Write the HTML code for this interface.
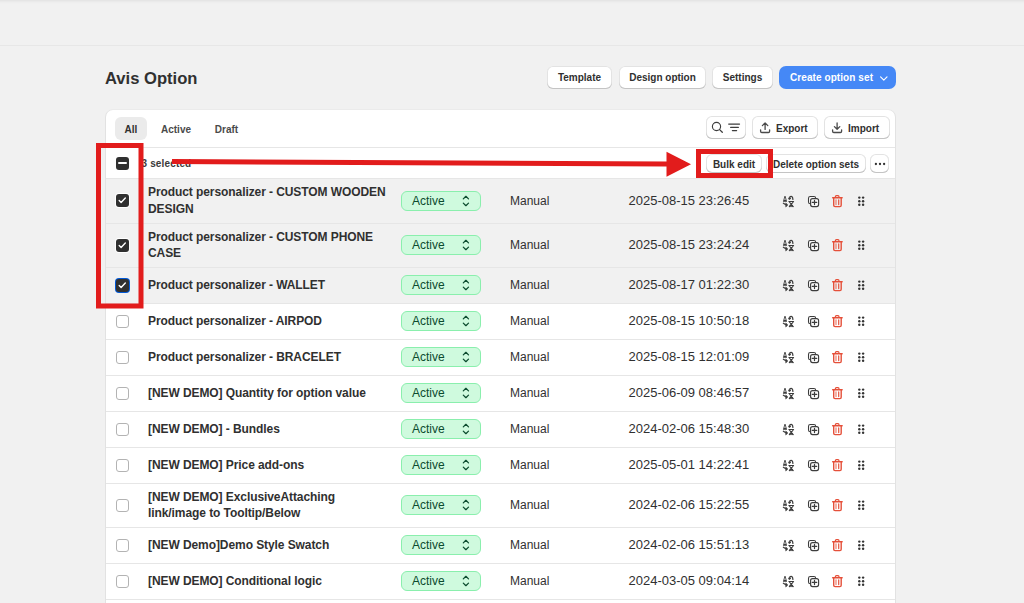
<!DOCTYPE html><html><head><meta charset="utf-8"><title>Avis Option</title><style>
*{box-sizing:border-box;margin:0;padding:0}
html,body{width:1024px;height:603px;overflow:hidden;background:#f1f1f1;font-family:"Liberation Sans",sans-serif;color:#303030}
.abs{position:absolute}
.topgrad{left:0;top:0;width:1024px;height:4px;background:linear-gradient(#e5e5e5 0,#e5e5e5 1px,#eaeaea 1px,#eaeaea 2px,#eeeeee 2px,#eeeeee 3px,#f0f0f0 3px)}
.topline{left:0;top:45px;width:1024px;height:1px;background:#e7e7e7}
.title{left:105px;top:69px;font-size:16.6px;font-weight:700;line-height:20px;color:#303030}
.btn{position:absolute;background:#fff;border-radius:6px;box-shadow:inset 0 -1px 0 #c4c4c4, inset 0 0 0 1px #e3e3e3;padding-top:1px;font-size:10px;font-weight:700;color:#303030;display:flex;align-items:center;justify-content:center;white-space:nowrap}
.primary{background:#4588f6;color:#fff;box-shadow:none;border-radius:7px;padding-top:0;letter-spacing:0.08px}
.card{left:106px;top:110px;width:789px;height:520px;background:#fff;border-radius:7px;box-shadow:-1px 0 0 0 #e2e2e2, 1px 0 0 0 #e2e2e2, 0 -1px 0 0 #ebebeb}
.tab{position:absolute;top:118px;height:22px;font-size:10px;font-weight:700;color:#4a4a4a;display:flex;align-items:center;justify-content:center}
.hline{position:absolute;left:106px;width:789px;height:1px;background:#e6e6e6}
.rowbg{position:absolute;left:106px;width:789px;background:#f1f1f1}
.cb{position:absolute;left:116px;width:13px;height:13px;border-radius:3px}
.cb.off{border:1px solid #b3b3b3;background:#fff}
.cb.on{background:#303030;box-shadow:0 0 0 1px #fff}
.cb.focus{box-shadow:0 0 0 1px #0058d6}
.name{position:absolute;left:148px;font-size:12px;font-weight:700;line-height:16px;color:#303030;white-space:nowrap;letter-spacing:-0.08px}
.badge{position:absolute;left:401px;width:80px;height:20px;border-radius:6px;background:#cffade;border:1px solid #8aefad;font-size:12px;color:#0c4b2e;line-height:17px}
.badge span{position:absolute;left:10px;top:1px}
.badge svg{position:absolute;left:60px;top:3px}
.manual{position:absolute;left:510px;font-size:12px;color:#303030;line-height:16px}
.date{position:absolute;left:628.5px;font-size:13px;color:#303030;line-height:16px}
.ic{position:absolute;line-height:0}
</style></head><body>
<div class="abs topgrad"></div><div class="abs topline"></div>
<div class="abs title">Avis Option</div>
<div class="btn" style="left:547px;top:66px;width:65px;height:23px;padding-top:0">Template</div>
<div class="btn" style="left:619px;top:66px;width:87px;height:23px;padding-top:0">Design option</div>
<div class="btn" style="left:712px;top:66px;width:61px;height:23px;padding-top:0">Settings</div>
<div class="btn primary" style="left:779px;top:66px;width:117px;height:23px;justify-content:flex-start;padding-left:11px">Create option set<svg style="margin-left:7px;position:relative;top:1px" width="9" height="6" viewBox="0 0 9 6"><path d="M0.6 0.9 L3.8 4.1 L7 0.9" fill="none" stroke="#fff" stroke-width="1.15" stroke-linecap="round" stroke-linejoin="round"/></svg></div>
<div class="abs card"></div>
<div class="abs" style="left:115px;top:117px;width:32px;height:23px;border-radius:6px;background:#ebebeb"></div>
<div class="tab" style="left:115px;width:32px;color:#303030">All</div>
<div class="tab" style="left:155px;width:42px">Active</div>
<div class="tab" style="left:208px;width:37px">Draft</div>
<div class="btn" style="left:706px;top:116px;width:40px;height:23px"><svg style="position:absolute;left:0;top:0" width="40" height="23" viewBox="0 0 40 23"><circle cx="10.5" cy="10.5" r="4.1" fill="none" stroke="#3d3d3d" stroke-width="1.15"/><path d="M13.6 13.6 L16.3 16.3" stroke="#3d3d3d" stroke-width="1.3" stroke-linecap="round"/><path d="M22.7 8 H33.5 M24.6 11.3 H32.4 M26.4 14.6 H30.6" stroke="#3d3d3d" stroke-width="1.25" stroke-linecap="round"/></svg></div>
<div class="btn" style="left:752px;top:116px;width:66px;height:23px;justify-content:flex-start;padding-left:7px"><svg width="12" height="12" viewBox="0 0 12 12" style="margin-right:5px"><path d="M6.1 7.4 V0.9 M3.4 3.6 L6.1 0.9 L8.8 3.6 M1.6 7.8 V9.3 A1.2 1.2 0 0 0 2.8 10.5 H9.4 A1.2 1.2 0 0 0 10.6 9.3 V7.8" fill="none" stroke="#4a4a4a" stroke-width="1.3" stroke-linecap="round" stroke-linejoin="round"/></svg>Export</div>
<div class="btn" style="left:824px;top:116px;width:66px;height:23px;justify-content:flex-start;padding-left:7px"><svg width="12" height="12" viewBox="0 0 12 12" style="margin-right:5px"><path d="M6.1 0.9 V7.3 M3.4 4.6 L6.1 7.3 L8.8 4.6 M1.6 7.8 V9.3 A1.2 1.2 0 0 0 2.8 10.5 H9.4 A1.2 1.2 0 0 0 10.6 9.3 V7.8" fill="none" stroke="#4a4a4a" stroke-width="1.3" stroke-linecap="round" stroke-linejoin="round"/></svg>Import</div>
<div class="hline" style="top:147px"></div>
<div class="cb on" style="top:157px"><div style="position:absolute;left:2px;top:5.4px;width:9px;height:1.7px;background:#fff;border-radius:1px"></div></div>
<div class="abs" style="left:141.5px;top:157px;font-size:10px;font-weight:700;color:#3a3a3a;line-height:14px;letter-spacing:0.15px">3 selected</div>
<div class="btn" style="left:706px;top:154px;width:56px;height:19px">Bulk edit</div>
<div class="btn" style="left:766px;top:154px;width:100px;height:19px">Delete option sets</div>
<div class="btn" style="left:870px;top:154px;width:19px;height:19px"><svg width="12" height="4" viewBox="0 0 12 4"><circle cx="1.9" cy="2" r="1.15" fill="#303030"/><circle cx="6" cy="2" r="1.15" fill="#303030"/><circle cx="10.1" cy="2" r="1.15" fill="#303030"/></svg></div>
<div class="rowbg" style="top:179px;height:44px"></div>
<div class="hline" style="top:178px"></div>
<div class="cb on" style="top:194px"><svg width="13" height="13" viewBox="0 0 13 13" style="position:absolute;left:0;top:0"><path d="M3.2 6.6 L5.1 8.4 L9.3 4.1" fill="none" stroke="#fff" stroke-width="1.4" stroke-linecap="round" stroke-linejoin="round"/></svg></div>
<div class="name" style="top:184px">Product personalizer - CUSTOM WOODEN</div>
<div class="name" style="top:201px">DESIGN</div>
<div class="badge" style="top:191px"><span>Active</span><svg width="8" height="12" viewBox="0 0 8 12"><path d="M1.3 3.9 L3.9 1.3 L6.5 3.9 M1.3 8.1 L3.9 10.7 L6.5 8.1" fill="none" stroke="#0c4b2e" stroke-width="1.25" stroke-linecap="round" stroke-linejoin="round"/></svg></div>
<div class="manual" style="top:192.5px">Manual</div>
<div class="date" style="top:192.5px">2025-08-15 23:26:45</div>
<div class="ic" style="left:782px;top:195px"><svg width="13" height="13" viewBox="0 0 13 13"><g fill="none" stroke="#3d3d3d" stroke-linecap="round" stroke-linejoin="round">
<path d="M0.9 6.7 L2.5 1.1 H3.5 L5.1 6.7 Z M2.2 4.7 L3 2.6 L3.8 4.7 Z" fill="#3d3d3d" fill-rule="evenodd" stroke="none"/>
<path d="M7.7 3.6 V2.6 Q7.7 1.4 9 1.4 Q10.8 1.4 10.9 4.4" stroke-width="1.2"/>
<path d="M6.6 3.1 H8.8 L7.7 4.6 Z" fill="#3d3d3d" stroke-width="0.7"/>
<path d="M1.4 8.3 L4.2 10" stroke-width="1.3"/>
<path d="M4 8.3 L5.8 10 L4 11.7 Z" fill="#3d3d3d" stroke-width="0.7"/>
<path d="M6.9 6.5 H11.6" stroke-width="1.1"/>
<path d="M7.4 7 L11.2 11.6 M11.2 7 L7.4 11.6" stroke-width="1.1"/>
<path d="M8.6 9.6 H10 L11 11.6 H7.6 Z" fill="#3d3d3d" stroke-width="0.6"/>
</g></svg></div>
<div class="ic" style="left:807px;top:195px"><svg width="13" height="13" viewBox="0 0 13 13"><g fill="none" stroke="#3d3d3d" stroke-width="1.05" stroke-linejoin="round">
<rect x="1.5" y="1.5" width="7.2" height="7.2" rx="1.8" fill="#f6f6f6"/>
<rect x="3.6" y="3.6" width="8" height="8" rx="2" fill="#fafafa" stroke-width="1.15"/>
<path d="M7.5 5.3 V9.6 M5.3 7.45 H9.7" stroke-linecap="round" stroke-width="1.2"/>
</g></svg></div>
<div class="ic" style="left:831px;top:194px"><svg width="13" height="14" viewBox="0 0 13 14"><g fill="none" stroke="#e5503a" stroke-linejoin="round" stroke-linecap="round">
<path d="M4.4 3.2 V2.7 Q4.4 1.7 5.4 1.7 H7 Q8 1.7 8 2.7 V3.2" stroke-width="1.2"/>
<path d="M1.7 3.75 H11.1" stroke-width="1.5"/>
<path d="M2.7 4 V11.2 Q2.7 12.6 4.1 12.6 H8.9 Q10.2 12.6 10.2 11.2 V4" stroke-width="1.4"/>
<path d="M5 5.9 V10.6" stroke-width="1.1" stroke-opacity="0.8"/>
<path d="M7.7 5.9 V10.6" stroke-width="1.2"/>
</g></svg></div>
<div class="ic" style="left:857px;top:196px"><svg width="9" height="11" viewBox="0 0 9 11"><g fill="#333">
<circle cx="2.3" cy="1.6" r="1.2"/><circle cx="6.1" cy="1.6" r="1.2"/>
<circle cx="2.3" cy="5.2" r="1.2"/><circle cx="6.1" cy="5.2" r="1.2"/>
<circle cx="2.3" cy="8.8" r="1.2"/><circle cx="6.1" cy="8.8" r="1.2"/>
</g></svg></div>
<div class="rowbg" style="top:224px;height:43px"></div>
<div class="hline" style="top:223px"></div>
<div class="cb on" style="top:239px"><svg width="13" height="13" viewBox="0 0 13 13" style="position:absolute;left:0;top:0"><path d="M3.2 6.6 L5.1 8.4 L9.3 4.1" fill="none" stroke="#fff" stroke-width="1.4" stroke-linecap="round" stroke-linejoin="round"/></svg></div>
<div class="name" style="top:229px">Product personalizer - CUSTOM PHONE</div>
<div class="name" style="top:245px">CASE</div>
<div class="badge" style="top:235px"><span>Active</span><svg width="8" height="12" viewBox="0 0 8 12"><path d="M1.3 3.9 L3.9 1.3 L6.5 3.9 M1.3 8.1 L3.9 10.7 L6.5 8.1" fill="none" stroke="#0c4b2e" stroke-width="1.25" stroke-linecap="round" stroke-linejoin="round"/></svg></div>
<div class="manual" style="top:237.0px">Manual</div>
<div class="date" style="top:237.0px">2025-08-15 23:24:24</div>
<div class="ic" style="left:782px;top:239px"><svg width="13" height="13" viewBox="0 0 13 13"><g fill="none" stroke="#3d3d3d" stroke-linecap="round" stroke-linejoin="round">
<path d="M0.9 6.7 L2.5 1.1 H3.5 L5.1 6.7 Z M2.2 4.7 L3 2.6 L3.8 4.7 Z" fill="#3d3d3d" fill-rule="evenodd" stroke="none"/>
<path d="M7.7 3.6 V2.6 Q7.7 1.4 9 1.4 Q10.8 1.4 10.9 4.4" stroke-width="1.2"/>
<path d="M6.6 3.1 H8.8 L7.7 4.6 Z" fill="#3d3d3d" stroke-width="0.7"/>
<path d="M1.4 8.3 L4.2 10" stroke-width="1.3"/>
<path d="M4 8.3 L5.8 10 L4 11.7 Z" fill="#3d3d3d" stroke-width="0.7"/>
<path d="M6.9 6.5 H11.6" stroke-width="1.1"/>
<path d="M7.4 7 L11.2 11.6 M11.2 7 L7.4 11.6" stroke-width="1.1"/>
<path d="M8.6 9.6 H10 L11 11.6 H7.6 Z" fill="#3d3d3d" stroke-width="0.6"/>
</g></svg></div>
<div class="ic" style="left:807px;top:239px"><svg width="13" height="13" viewBox="0 0 13 13"><g fill="none" stroke="#3d3d3d" stroke-width="1.05" stroke-linejoin="round">
<rect x="1.5" y="1.5" width="7.2" height="7.2" rx="1.8" fill="#f6f6f6"/>
<rect x="3.6" y="3.6" width="8" height="8" rx="2" fill="#fafafa" stroke-width="1.15"/>
<path d="M7.5 5.3 V9.6 M5.3 7.45 H9.7" stroke-linecap="round" stroke-width="1.2"/>
</g></svg></div>
<div class="ic" style="left:831px;top:238px"><svg width="13" height="14" viewBox="0 0 13 14"><g fill="none" stroke="#e5503a" stroke-linejoin="round" stroke-linecap="round">
<path d="M4.4 3.2 V2.7 Q4.4 1.7 5.4 1.7 H7 Q8 1.7 8 2.7 V3.2" stroke-width="1.2"/>
<path d="M1.7 3.75 H11.1" stroke-width="1.5"/>
<path d="M2.7 4 V11.2 Q2.7 12.6 4.1 12.6 H8.9 Q10.2 12.6 10.2 11.2 V4" stroke-width="1.4"/>
<path d="M5 5.9 V10.6" stroke-width="1.1" stroke-opacity="0.8"/>
<path d="M7.7 5.9 V10.6" stroke-width="1.2"/>
</g></svg></div>
<div class="ic" style="left:857px;top:240px"><svg width="9" height="11" viewBox="0 0 9 11"><g fill="#333">
<circle cx="2.3" cy="1.6" r="1.2"/><circle cx="6.1" cy="1.6" r="1.2"/>
<circle cx="2.3" cy="5.2" r="1.2"/><circle cx="6.1" cy="5.2" r="1.2"/>
<circle cx="2.3" cy="8.8" r="1.2"/><circle cx="6.1" cy="8.8" r="1.2"/>
</g></svg></div>
<div class="rowbg" style="top:268px;height:35px"></div>
<div class="hline" style="top:267px"></div>
<div class="cb on focus" style="top:279px"><svg width="13" height="13" viewBox="0 0 13 13" style="position:absolute;left:0;top:0"><path d="M3.2 6.6 L5.1 8.4 L9.3 4.1" fill="none" stroke="#fff" stroke-width="1.4" stroke-linecap="round" stroke-linejoin="round"/></svg></div>
<div class="name" style="top:277px">Product personalizer - WALLET</div>
<div class="badge" style="top:275px"><span>Active</span><svg width="8" height="12" viewBox="0 0 8 12"><path d="M1.3 3.9 L3.9 1.3 L6.5 3.9 M1.3 8.1 L3.9 10.7 L6.5 8.1" fill="none" stroke="#0c4b2e" stroke-width="1.25" stroke-linecap="round" stroke-linejoin="round"/></svg></div>
<div class="manual" style="top:277.0px">Manual</div>
<div class="date" style="top:277.0px">2025-08-17 01:22:30</div>
<div class="ic" style="left:782px;top:279px"><svg width="13" height="13" viewBox="0 0 13 13"><g fill="none" stroke="#3d3d3d" stroke-linecap="round" stroke-linejoin="round">
<path d="M0.9 6.7 L2.5 1.1 H3.5 L5.1 6.7 Z M2.2 4.7 L3 2.6 L3.8 4.7 Z" fill="#3d3d3d" fill-rule="evenodd" stroke="none"/>
<path d="M7.7 3.6 V2.6 Q7.7 1.4 9 1.4 Q10.8 1.4 10.9 4.4" stroke-width="1.2"/>
<path d="M6.6 3.1 H8.8 L7.7 4.6 Z" fill="#3d3d3d" stroke-width="0.7"/>
<path d="M1.4 8.3 L4.2 10" stroke-width="1.3"/>
<path d="M4 8.3 L5.8 10 L4 11.7 Z" fill="#3d3d3d" stroke-width="0.7"/>
<path d="M6.9 6.5 H11.6" stroke-width="1.1"/>
<path d="M7.4 7 L11.2 11.6 M11.2 7 L7.4 11.6" stroke-width="1.1"/>
<path d="M8.6 9.6 H10 L11 11.6 H7.6 Z" fill="#3d3d3d" stroke-width="0.6"/>
</g></svg></div>
<div class="ic" style="left:807px;top:279px"><svg width="13" height="13" viewBox="0 0 13 13"><g fill="none" stroke="#3d3d3d" stroke-width="1.05" stroke-linejoin="round">
<rect x="1.5" y="1.5" width="7.2" height="7.2" rx="1.8" fill="#f6f6f6"/>
<rect x="3.6" y="3.6" width="8" height="8" rx="2" fill="#fafafa" stroke-width="1.15"/>
<path d="M7.5 5.3 V9.6 M5.3 7.45 H9.7" stroke-linecap="round" stroke-width="1.2"/>
</g></svg></div>
<div class="ic" style="left:831px;top:278px"><svg width="13" height="14" viewBox="0 0 13 14"><g fill="none" stroke="#e5503a" stroke-linejoin="round" stroke-linecap="round">
<path d="M4.4 3.2 V2.7 Q4.4 1.7 5.4 1.7 H7 Q8 1.7 8 2.7 V3.2" stroke-width="1.2"/>
<path d="M1.7 3.75 H11.1" stroke-width="1.5"/>
<path d="M2.7 4 V11.2 Q2.7 12.6 4.1 12.6 H8.9 Q10.2 12.6 10.2 11.2 V4" stroke-width="1.4"/>
<path d="M5 5.9 V10.6" stroke-width="1.1" stroke-opacity="0.8"/>
<path d="M7.7 5.9 V10.6" stroke-width="1.2"/>
</g></svg></div>
<div class="ic" style="left:857px;top:280px"><svg width="9" height="11" viewBox="0 0 9 11"><g fill="#333">
<circle cx="2.3" cy="1.6" r="1.2"/><circle cx="6.1" cy="1.6" r="1.2"/>
<circle cx="2.3" cy="5.2" r="1.2"/><circle cx="6.1" cy="5.2" r="1.2"/>
<circle cx="2.3" cy="8.8" r="1.2"/><circle cx="6.1" cy="8.8" r="1.2"/>
</g></svg></div>
<div class="hline" style="top:303px"></div>
<div class="cb off" style="top:315px"></div>
<div class="name" style="top:313px">Product personalizer - AIRPOD</div>
<div class="badge" style="top:311px"><span>Active</span><svg width="8" height="12" viewBox="0 0 8 12"><path d="M1.3 3.9 L3.9 1.3 L6.5 3.9 M1.3 8.1 L3.9 10.7 L6.5 8.1" fill="none" stroke="#0c4b2e" stroke-width="1.25" stroke-linecap="round" stroke-linejoin="round"/></svg></div>
<div class="manual" style="top:313.0px">Manual</div>
<div class="date" style="top:313.0px">2025-08-15 10:50:18</div>
<div class="ic" style="left:782px;top:315px"><svg width="13" height="13" viewBox="0 0 13 13"><g fill="none" stroke="#3d3d3d" stroke-linecap="round" stroke-linejoin="round">
<path d="M0.9 6.7 L2.5 1.1 H3.5 L5.1 6.7 Z M2.2 4.7 L3 2.6 L3.8 4.7 Z" fill="#3d3d3d" fill-rule="evenodd" stroke="none"/>
<path d="M7.7 3.6 V2.6 Q7.7 1.4 9 1.4 Q10.8 1.4 10.9 4.4" stroke-width="1.2"/>
<path d="M6.6 3.1 H8.8 L7.7 4.6 Z" fill="#3d3d3d" stroke-width="0.7"/>
<path d="M1.4 8.3 L4.2 10" stroke-width="1.3"/>
<path d="M4 8.3 L5.8 10 L4 11.7 Z" fill="#3d3d3d" stroke-width="0.7"/>
<path d="M6.9 6.5 H11.6" stroke-width="1.1"/>
<path d="M7.4 7 L11.2 11.6 M11.2 7 L7.4 11.6" stroke-width="1.1"/>
<path d="M8.6 9.6 H10 L11 11.6 H7.6 Z" fill="#3d3d3d" stroke-width="0.6"/>
</g></svg></div>
<div class="ic" style="left:807px;top:315px"><svg width="13" height="13" viewBox="0 0 13 13"><g fill="none" stroke="#3d3d3d" stroke-width="1.05" stroke-linejoin="round">
<rect x="1.5" y="1.5" width="7.2" height="7.2" rx="1.8" fill="#f6f6f6"/>
<rect x="3.6" y="3.6" width="8" height="8" rx="2" fill="#fafafa" stroke-width="1.15"/>
<path d="M7.5 5.3 V9.6 M5.3 7.45 H9.7" stroke-linecap="round" stroke-width="1.2"/>
</g></svg></div>
<div class="ic" style="left:831px;top:314px"><svg width="13" height="14" viewBox="0 0 13 14"><g fill="none" stroke="#e5503a" stroke-linejoin="round" stroke-linecap="round">
<path d="M4.4 3.2 V2.7 Q4.4 1.7 5.4 1.7 H7 Q8 1.7 8 2.7 V3.2" stroke-width="1.2"/>
<path d="M1.7 3.75 H11.1" stroke-width="1.5"/>
<path d="M2.7 4 V11.2 Q2.7 12.6 4.1 12.6 H8.9 Q10.2 12.6 10.2 11.2 V4" stroke-width="1.4"/>
<path d="M5 5.9 V10.6" stroke-width="1.1" stroke-opacity="0.8"/>
<path d="M7.7 5.9 V10.6" stroke-width="1.2"/>
</g></svg></div>
<div class="ic" style="left:857px;top:316px"><svg width="9" height="11" viewBox="0 0 9 11"><g fill="#333">
<circle cx="2.3" cy="1.6" r="1.2"/><circle cx="6.1" cy="1.6" r="1.2"/>
<circle cx="2.3" cy="5.2" r="1.2"/><circle cx="6.1" cy="5.2" r="1.2"/>
<circle cx="2.3" cy="8.8" r="1.2"/><circle cx="6.1" cy="8.8" r="1.2"/>
</g></svg></div>
<div class="hline" style="top:339px"></div>
<div class="cb off" style="top:351px"></div>
<div class="name" style="top:349px">Product personalizer - BRACELET</div>
<div class="badge" style="top:347px"><span>Active</span><svg width="8" height="12" viewBox="0 0 8 12"><path d="M1.3 3.9 L3.9 1.3 L6.5 3.9 M1.3 8.1 L3.9 10.7 L6.5 8.1" fill="none" stroke="#0c4b2e" stroke-width="1.25" stroke-linecap="round" stroke-linejoin="round"/></svg></div>
<div class="manual" style="top:349.0px">Manual</div>
<div class="date" style="top:349.0px">2025-08-15 12:01:09</div>
<div class="ic" style="left:782px;top:351px"><svg width="13" height="13" viewBox="0 0 13 13"><g fill="none" stroke="#3d3d3d" stroke-linecap="round" stroke-linejoin="round">
<path d="M0.9 6.7 L2.5 1.1 H3.5 L5.1 6.7 Z M2.2 4.7 L3 2.6 L3.8 4.7 Z" fill="#3d3d3d" fill-rule="evenodd" stroke="none"/>
<path d="M7.7 3.6 V2.6 Q7.7 1.4 9 1.4 Q10.8 1.4 10.9 4.4" stroke-width="1.2"/>
<path d="M6.6 3.1 H8.8 L7.7 4.6 Z" fill="#3d3d3d" stroke-width="0.7"/>
<path d="M1.4 8.3 L4.2 10" stroke-width="1.3"/>
<path d="M4 8.3 L5.8 10 L4 11.7 Z" fill="#3d3d3d" stroke-width="0.7"/>
<path d="M6.9 6.5 H11.6" stroke-width="1.1"/>
<path d="M7.4 7 L11.2 11.6 M11.2 7 L7.4 11.6" stroke-width="1.1"/>
<path d="M8.6 9.6 H10 L11 11.6 H7.6 Z" fill="#3d3d3d" stroke-width="0.6"/>
</g></svg></div>
<div class="ic" style="left:807px;top:351px"><svg width="13" height="13" viewBox="0 0 13 13"><g fill="none" stroke="#3d3d3d" stroke-width="1.05" stroke-linejoin="round">
<rect x="1.5" y="1.5" width="7.2" height="7.2" rx="1.8" fill="#f6f6f6"/>
<rect x="3.6" y="3.6" width="8" height="8" rx="2" fill="#fafafa" stroke-width="1.15"/>
<path d="M7.5 5.3 V9.6 M5.3 7.45 H9.7" stroke-linecap="round" stroke-width="1.2"/>
</g></svg></div>
<div class="ic" style="left:831px;top:350px"><svg width="13" height="14" viewBox="0 0 13 14"><g fill="none" stroke="#e5503a" stroke-linejoin="round" stroke-linecap="round">
<path d="M4.4 3.2 V2.7 Q4.4 1.7 5.4 1.7 H7 Q8 1.7 8 2.7 V3.2" stroke-width="1.2"/>
<path d="M1.7 3.75 H11.1" stroke-width="1.5"/>
<path d="M2.7 4 V11.2 Q2.7 12.6 4.1 12.6 H8.9 Q10.2 12.6 10.2 11.2 V4" stroke-width="1.4"/>
<path d="M5 5.9 V10.6" stroke-width="1.1" stroke-opacity="0.8"/>
<path d="M7.7 5.9 V10.6" stroke-width="1.2"/>
</g></svg></div>
<div class="ic" style="left:857px;top:352px"><svg width="9" height="11" viewBox="0 0 9 11"><g fill="#333">
<circle cx="2.3" cy="1.6" r="1.2"/><circle cx="6.1" cy="1.6" r="1.2"/>
<circle cx="2.3" cy="5.2" r="1.2"/><circle cx="6.1" cy="5.2" r="1.2"/>
<circle cx="2.3" cy="8.8" r="1.2"/><circle cx="6.1" cy="8.8" r="1.2"/>
</g></svg></div>
<div class="hline" style="top:375px"></div>
<div class="cb off" style="top:387px"></div>
<div class="name" style="top:385px">[NEW DEMO] Quantity for option value</div>
<div class="badge" style="top:383px"><span>Active</span><svg width="8" height="12" viewBox="0 0 8 12"><path d="M1.3 3.9 L3.9 1.3 L6.5 3.9 M1.3 8.1 L3.9 10.7 L6.5 8.1" fill="none" stroke="#0c4b2e" stroke-width="1.25" stroke-linecap="round" stroke-linejoin="round"/></svg></div>
<div class="manual" style="top:385.0px">Manual</div>
<div class="date" style="top:385.0px">2025-06-09 08:46:57</div>
<div class="ic" style="left:782px;top:387px"><svg width="13" height="13" viewBox="0 0 13 13"><g fill="none" stroke="#3d3d3d" stroke-linecap="round" stroke-linejoin="round">
<path d="M0.9 6.7 L2.5 1.1 H3.5 L5.1 6.7 Z M2.2 4.7 L3 2.6 L3.8 4.7 Z" fill="#3d3d3d" fill-rule="evenodd" stroke="none"/>
<path d="M7.7 3.6 V2.6 Q7.7 1.4 9 1.4 Q10.8 1.4 10.9 4.4" stroke-width="1.2"/>
<path d="M6.6 3.1 H8.8 L7.7 4.6 Z" fill="#3d3d3d" stroke-width="0.7"/>
<path d="M1.4 8.3 L4.2 10" stroke-width="1.3"/>
<path d="M4 8.3 L5.8 10 L4 11.7 Z" fill="#3d3d3d" stroke-width="0.7"/>
<path d="M6.9 6.5 H11.6" stroke-width="1.1"/>
<path d="M7.4 7 L11.2 11.6 M11.2 7 L7.4 11.6" stroke-width="1.1"/>
<path d="M8.6 9.6 H10 L11 11.6 H7.6 Z" fill="#3d3d3d" stroke-width="0.6"/>
</g></svg></div>
<div class="ic" style="left:807px;top:387px"><svg width="13" height="13" viewBox="0 0 13 13"><g fill="none" stroke="#3d3d3d" stroke-width="1.05" stroke-linejoin="round">
<rect x="1.5" y="1.5" width="7.2" height="7.2" rx="1.8" fill="#f6f6f6"/>
<rect x="3.6" y="3.6" width="8" height="8" rx="2" fill="#fafafa" stroke-width="1.15"/>
<path d="M7.5 5.3 V9.6 M5.3 7.45 H9.7" stroke-linecap="round" stroke-width="1.2"/>
</g></svg></div>
<div class="ic" style="left:831px;top:386px"><svg width="13" height="14" viewBox="0 0 13 14"><g fill="none" stroke="#e5503a" stroke-linejoin="round" stroke-linecap="round">
<path d="M4.4 3.2 V2.7 Q4.4 1.7 5.4 1.7 H7 Q8 1.7 8 2.7 V3.2" stroke-width="1.2"/>
<path d="M1.7 3.75 H11.1" stroke-width="1.5"/>
<path d="M2.7 4 V11.2 Q2.7 12.6 4.1 12.6 H8.9 Q10.2 12.6 10.2 11.2 V4" stroke-width="1.4"/>
<path d="M5 5.9 V10.6" stroke-width="1.1" stroke-opacity="0.8"/>
<path d="M7.7 5.9 V10.6" stroke-width="1.2"/>
</g></svg></div>
<div class="ic" style="left:857px;top:388px"><svg width="9" height="11" viewBox="0 0 9 11"><g fill="#333">
<circle cx="2.3" cy="1.6" r="1.2"/><circle cx="6.1" cy="1.6" r="1.2"/>
<circle cx="2.3" cy="5.2" r="1.2"/><circle cx="6.1" cy="5.2" r="1.2"/>
<circle cx="2.3" cy="8.8" r="1.2"/><circle cx="6.1" cy="8.8" r="1.2"/>
</g></svg></div>
<div class="hline" style="top:411px"></div>
<div class="cb off" style="top:423px"></div>
<div class="name" style="top:421px">[NEW DEMO] - Bundles</div>
<div class="badge" style="top:419px"><span>Active</span><svg width="8" height="12" viewBox="0 0 8 12"><path d="M1.3 3.9 L3.9 1.3 L6.5 3.9 M1.3 8.1 L3.9 10.7 L6.5 8.1" fill="none" stroke="#0c4b2e" stroke-width="1.25" stroke-linecap="round" stroke-linejoin="round"/></svg></div>
<div class="manual" style="top:421.0px">Manual</div>
<div class="date" style="top:421.0px">2024-02-06 15:48:30</div>
<div class="ic" style="left:782px;top:423px"><svg width="13" height="13" viewBox="0 0 13 13"><g fill="none" stroke="#3d3d3d" stroke-linecap="round" stroke-linejoin="round">
<path d="M0.9 6.7 L2.5 1.1 H3.5 L5.1 6.7 Z M2.2 4.7 L3 2.6 L3.8 4.7 Z" fill="#3d3d3d" fill-rule="evenodd" stroke="none"/>
<path d="M7.7 3.6 V2.6 Q7.7 1.4 9 1.4 Q10.8 1.4 10.9 4.4" stroke-width="1.2"/>
<path d="M6.6 3.1 H8.8 L7.7 4.6 Z" fill="#3d3d3d" stroke-width="0.7"/>
<path d="M1.4 8.3 L4.2 10" stroke-width="1.3"/>
<path d="M4 8.3 L5.8 10 L4 11.7 Z" fill="#3d3d3d" stroke-width="0.7"/>
<path d="M6.9 6.5 H11.6" stroke-width="1.1"/>
<path d="M7.4 7 L11.2 11.6 M11.2 7 L7.4 11.6" stroke-width="1.1"/>
<path d="M8.6 9.6 H10 L11 11.6 H7.6 Z" fill="#3d3d3d" stroke-width="0.6"/>
</g></svg></div>
<div class="ic" style="left:807px;top:423px"><svg width="13" height="13" viewBox="0 0 13 13"><g fill="none" stroke="#3d3d3d" stroke-width="1.05" stroke-linejoin="round">
<rect x="1.5" y="1.5" width="7.2" height="7.2" rx="1.8" fill="#f6f6f6"/>
<rect x="3.6" y="3.6" width="8" height="8" rx="2" fill="#fafafa" stroke-width="1.15"/>
<path d="M7.5 5.3 V9.6 M5.3 7.45 H9.7" stroke-linecap="round" stroke-width="1.2"/>
</g></svg></div>
<div class="ic" style="left:831px;top:422px"><svg width="13" height="14" viewBox="0 0 13 14"><g fill="none" stroke="#e5503a" stroke-linejoin="round" stroke-linecap="round">
<path d="M4.4 3.2 V2.7 Q4.4 1.7 5.4 1.7 H7 Q8 1.7 8 2.7 V3.2" stroke-width="1.2"/>
<path d="M1.7 3.75 H11.1" stroke-width="1.5"/>
<path d="M2.7 4 V11.2 Q2.7 12.6 4.1 12.6 H8.9 Q10.2 12.6 10.2 11.2 V4" stroke-width="1.4"/>
<path d="M5 5.9 V10.6" stroke-width="1.1" stroke-opacity="0.8"/>
<path d="M7.7 5.9 V10.6" stroke-width="1.2"/>
</g></svg></div>
<div class="ic" style="left:857px;top:424px"><svg width="9" height="11" viewBox="0 0 9 11"><g fill="#333">
<circle cx="2.3" cy="1.6" r="1.2"/><circle cx="6.1" cy="1.6" r="1.2"/>
<circle cx="2.3" cy="5.2" r="1.2"/><circle cx="6.1" cy="5.2" r="1.2"/>
<circle cx="2.3" cy="8.8" r="1.2"/><circle cx="6.1" cy="8.8" r="1.2"/>
</g></svg></div>
<div class="hline" style="top:447px"></div>
<div class="cb off" style="top:459px"></div>
<div class="name" style="top:457px">[NEW DEMO] Price add-ons</div>
<div class="badge" style="top:455px"><span>Active</span><svg width="8" height="12" viewBox="0 0 8 12"><path d="M1.3 3.9 L3.9 1.3 L6.5 3.9 M1.3 8.1 L3.9 10.7 L6.5 8.1" fill="none" stroke="#0c4b2e" stroke-width="1.25" stroke-linecap="round" stroke-linejoin="round"/></svg></div>
<div class="manual" style="top:457.0px">Manual</div>
<div class="date" style="top:457.0px">2025-05-01 14:22:41</div>
<div class="ic" style="left:782px;top:459px"><svg width="13" height="13" viewBox="0 0 13 13"><g fill="none" stroke="#3d3d3d" stroke-linecap="round" stroke-linejoin="round">
<path d="M0.9 6.7 L2.5 1.1 H3.5 L5.1 6.7 Z M2.2 4.7 L3 2.6 L3.8 4.7 Z" fill="#3d3d3d" fill-rule="evenodd" stroke="none"/>
<path d="M7.7 3.6 V2.6 Q7.7 1.4 9 1.4 Q10.8 1.4 10.9 4.4" stroke-width="1.2"/>
<path d="M6.6 3.1 H8.8 L7.7 4.6 Z" fill="#3d3d3d" stroke-width="0.7"/>
<path d="M1.4 8.3 L4.2 10" stroke-width="1.3"/>
<path d="M4 8.3 L5.8 10 L4 11.7 Z" fill="#3d3d3d" stroke-width="0.7"/>
<path d="M6.9 6.5 H11.6" stroke-width="1.1"/>
<path d="M7.4 7 L11.2 11.6 M11.2 7 L7.4 11.6" stroke-width="1.1"/>
<path d="M8.6 9.6 H10 L11 11.6 H7.6 Z" fill="#3d3d3d" stroke-width="0.6"/>
</g></svg></div>
<div class="ic" style="left:807px;top:459px"><svg width="13" height="13" viewBox="0 0 13 13"><g fill="none" stroke="#3d3d3d" stroke-width="1.05" stroke-linejoin="round">
<rect x="1.5" y="1.5" width="7.2" height="7.2" rx="1.8" fill="#f6f6f6"/>
<rect x="3.6" y="3.6" width="8" height="8" rx="2" fill="#fafafa" stroke-width="1.15"/>
<path d="M7.5 5.3 V9.6 M5.3 7.45 H9.7" stroke-linecap="round" stroke-width="1.2"/>
</g></svg></div>
<div class="ic" style="left:831px;top:458px"><svg width="13" height="14" viewBox="0 0 13 14"><g fill="none" stroke="#e5503a" stroke-linejoin="round" stroke-linecap="round">
<path d="M4.4 3.2 V2.7 Q4.4 1.7 5.4 1.7 H7 Q8 1.7 8 2.7 V3.2" stroke-width="1.2"/>
<path d="M1.7 3.75 H11.1" stroke-width="1.5"/>
<path d="M2.7 4 V11.2 Q2.7 12.6 4.1 12.6 H8.9 Q10.2 12.6 10.2 11.2 V4" stroke-width="1.4"/>
<path d="M5 5.9 V10.6" stroke-width="1.1" stroke-opacity="0.8"/>
<path d="M7.7 5.9 V10.6" stroke-width="1.2"/>
</g></svg></div>
<div class="ic" style="left:857px;top:460px"><svg width="9" height="11" viewBox="0 0 9 11"><g fill="#333">
<circle cx="2.3" cy="1.6" r="1.2"/><circle cx="6.1" cy="1.6" r="1.2"/>
<circle cx="2.3" cy="5.2" r="1.2"/><circle cx="6.1" cy="5.2" r="1.2"/>
<circle cx="2.3" cy="8.8" r="1.2"/><circle cx="6.1" cy="8.8" r="1.2"/>
</g></svg></div>
<div class="hline" style="top:483px"></div>
<div class="cb off" style="top:499px"></div>
<div class="name" style="top:489px">[NEW DEMO] ExclusiveAttaching</div>
<div class="name" style="top:505px">link/image to Tooltip/Below</div>
<div class="badge" style="top:495px"><span>Active</span><svg width="8" height="12" viewBox="0 0 8 12"><path d="M1.3 3.9 L3.9 1.3 L6.5 3.9 M1.3 8.1 L3.9 10.7 L6.5 8.1" fill="none" stroke="#0c4b2e" stroke-width="1.25" stroke-linecap="round" stroke-linejoin="round"/></svg></div>
<div class="manual" style="top:497.0px">Manual</div>
<div class="date" style="top:497.0px">2024-02-06 15:22:55</div>
<div class="ic" style="left:782px;top:499px"><svg width="13" height="13" viewBox="0 0 13 13"><g fill="none" stroke="#3d3d3d" stroke-linecap="round" stroke-linejoin="round">
<path d="M0.9 6.7 L2.5 1.1 H3.5 L5.1 6.7 Z M2.2 4.7 L3 2.6 L3.8 4.7 Z" fill="#3d3d3d" fill-rule="evenodd" stroke="none"/>
<path d="M7.7 3.6 V2.6 Q7.7 1.4 9 1.4 Q10.8 1.4 10.9 4.4" stroke-width="1.2"/>
<path d="M6.6 3.1 H8.8 L7.7 4.6 Z" fill="#3d3d3d" stroke-width="0.7"/>
<path d="M1.4 8.3 L4.2 10" stroke-width="1.3"/>
<path d="M4 8.3 L5.8 10 L4 11.7 Z" fill="#3d3d3d" stroke-width="0.7"/>
<path d="M6.9 6.5 H11.6" stroke-width="1.1"/>
<path d="M7.4 7 L11.2 11.6 M11.2 7 L7.4 11.6" stroke-width="1.1"/>
<path d="M8.6 9.6 H10 L11 11.6 H7.6 Z" fill="#3d3d3d" stroke-width="0.6"/>
</g></svg></div>
<div class="ic" style="left:807px;top:499px"><svg width="13" height="13" viewBox="0 0 13 13"><g fill="none" stroke="#3d3d3d" stroke-width="1.05" stroke-linejoin="round">
<rect x="1.5" y="1.5" width="7.2" height="7.2" rx="1.8" fill="#f6f6f6"/>
<rect x="3.6" y="3.6" width="8" height="8" rx="2" fill="#fafafa" stroke-width="1.15"/>
<path d="M7.5 5.3 V9.6 M5.3 7.45 H9.7" stroke-linecap="round" stroke-width="1.2"/>
</g></svg></div>
<div class="ic" style="left:831px;top:498px"><svg width="13" height="14" viewBox="0 0 13 14"><g fill="none" stroke="#e5503a" stroke-linejoin="round" stroke-linecap="round">
<path d="M4.4 3.2 V2.7 Q4.4 1.7 5.4 1.7 H7 Q8 1.7 8 2.7 V3.2" stroke-width="1.2"/>
<path d="M1.7 3.75 H11.1" stroke-width="1.5"/>
<path d="M2.7 4 V11.2 Q2.7 12.6 4.1 12.6 H8.9 Q10.2 12.6 10.2 11.2 V4" stroke-width="1.4"/>
<path d="M5 5.9 V10.6" stroke-width="1.1" stroke-opacity="0.8"/>
<path d="M7.7 5.9 V10.6" stroke-width="1.2"/>
</g></svg></div>
<div class="ic" style="left:857px;top:500px"><svg width="9" height="11" viewBox="0 0 9 11"><g fill="#333">
<circle cx="2.3" cy="1.6" r="1.2"/><circle cx="6.1" cy="1.6" r="1.2"/>
<circle cx="2.3" cy="5.2" r="1.2"/><circle cx="6.1" cy="5.2" r="1.2"/>
<circle cx="2.3" cy="8.8" r="1.2"/><circle cx="6.1" cy="8.8" r="1.2"/>
</g></svg></div>
<div class="hline" style="top:527px"></div>
<div class="cb off" style="top:539px"></div>
<div class="name" style="top:537px">[NEW Demo]Demo Style Swatch</div>
<div class="badge" style="top:535px"><span>Active</span><svg width="8" height="12" viewBox="0 0 8 12"><path d="M1.3 3.9 L3.9 1.3 L6.5 3.9 M1.3 8.1 L3.9 10.7 L6.5 8.1" fill="none" stroke="#0c4b2e" stroke-width="1.25" stroke-linecap="round" stroke-linejoin="round"/></svg></div>
<div class="manual" style="top:537.0px">Manual</div>
<div class="date" style="top:537.0px">2024-02-06 15:51:13</div>
<div class="ic" style="left:782px;top:539px"><svg width="13" height="13" viewBox="0 0 13 13"><g fill="none" stroke="#3d3d3d" stroke-linecap="round" stroke-linejoin="round">
<path d="M0.9 6.7 L2.5 1.1 H3.5 L5.1 6.7 Z M2.2 4.7 L3 2.6 L3.8 4.7 Z" fill="#3d3d3d" fill-rule="evenodd" stroke="none"/>
<path d="M7.7 3.6 V2.6 Q7.7 1.4 9 1.4 Q10.8 1.4 10.9 4.4" stroke-width="1.2"/>
<path d="M6.6 3.1 H8.8 L7.7 4.6 Z" fill="#3d3d3d" stroke-width="0.7"/>
<path d="M1.4 8.3 L4.2 10" stroke-width="1.3"/>
<path d="M4 8.3 L5.8 10 L4 11.7 Z" fill="#3d3d3d" stroke-width="0.7"/>
<path d="M6.9 6.5 H11.6" stroke-width="1.1"/>
<path d="M7.4 7 L11.2 11.6 M11.2 7 L7.4 11.6" stroke-width="1.1"/>
<path d="M8.6 9.6 H10 L11 11.6 H7.6 Z" fill="#3d3d3d" stroke-width="0.6"/>
</g></svg></div>
<div class="ic" style="left:807px;top:539px"><svg width="13" height="13" viewBox="0 0 13 13"><g fill="none" stroke="#3d3d3d" stroke-width="1.05" stroke-linejoin="round">
<rect x="1.5" y="1.5" width="7.2" height="7.2" rx="1.8" fill="#f6f6f6"/>
<rect x="3.6" y="3.6" width="8" height="8" rx="2" fill="#fafafa" stroke-width="1.15"/>
<path d="M7.5 5.3 V9.6 M5.3 7.45 H9.7" stroke-linecap="round" stroke-width="1.2"/>
</g></svg></div>
<div class="ic" style="left:831px;top:538px"><svg width="13" height="14" viewBox="0 0 13 14"><g fill="none" stroke="#e5503a" stroke-linejoin="round" stroke-linecap="round">
<path d="M4.4 3.2 V2.7 Q4.4 1.7 5.4 1.7 H7 Q8 1.7 8 2.7 V3.2" stroke-width="1.2"/>
<path d="M1.7 3.75 H11.1" stroke-width="1.5"/>
<path d="M2.7 4 V11.2 Q2.7 12.6 4.1 12.6 H8.9 Q10.2 12.6 10.2 11.2 V4" stroke-width="1.4"/>
<path d="M5 5.9 V10.6" stroke-width="1.1" stroke-opacity="0.8"/>
<path d="M7.7 5.9 V10.6" stroke-width="1.2"/>
</g></svg></div>
<div class="ic" style="left:857px;top:540px"><svg width="9" height="11" viewBox="0 0 9 11"><g fill="#333">
<circle cx="2.3" cy="1.6" r="1.2"/><circle cx="6.1" cy="1.6" r="1.2"/>
<circle cx="2.3" cy="5.2" r="1.2"/><circle cx="6.1" cy="5.2" r="1.2"/>
<circle cx="2.3" cy="8.8" r="1.2"/><circle cx="6.1" cy="8.8" r="1.2"/>
</g></svg></div>
<div class="hline" style="top:563px"></div>
<div class="cb off" style="top:575px"></div>
<div class="name" style="top:573px">[NEW DEMO] Conditional logic</div>
<div class="badge" style="top:571px"><span>Active</span><svg width="8" height="12" viewBox="0 0 8 12"><path d="M1.3 3.9 L3.9 1.3 L6.5 3.9 M1.3 8.1 L3.9 10.7 L6.5 8.1" fill="none" stroke="#0c4b2e" stroke-width="1.25" stroke-linecap="round" stroke-linejoin="round"/></svg></div>
<div class="manual" style="top:573.0px">Manual</div>
<div class="date" style="top:573.0px">2024-03-05 09:04:14</div>
<div class="ic" style="left:782px;top:575px"><svg width="13" height="13" viewBox="0 0 13 13"><g fill="none" stroke="#3d3d3d" stroke-linecap="round" stroke-linejoin="round">
<path d="M0.9 6.7 L2.5 1.1 H3.5 L5.1 6.7 Z M2.2 4.7 L3 2.6 L3.8 4.7 Z" fill="#3d3d3d" fill-rule="evenodd" stroke="none"/>
<path d="M7.7 3.6 V2.6 Q7.7 1.4 9 1.4 Q10.8 1.4 10.9 4.4" stroke-width="1.2"/>
<path d="M6.6 3.1 H8.8 L7.7 4.6 Z" fill="#3d3d3d" stroke-width="0.7"/>
<path d="M1.4 8.3 L4.2 10" stroke-width="1.3"/>
<path d="M4 8.3 L5.8 10 L4 11.7 Z" fill="#3d3d3d" stroke-width="0.7"/>
<path d="M6.9 6.5 H11.6" stroke-width="1.1"/>
<path d="M7.4 7 L11.2 11.6 M11.2 7 L7.4 11.6" stroke-width="1.1"/>
<path d="M8.6 9.6 H10 L11 11.6 H7.6 Z" fill="#3d3d3d" stroke-width="0.6"/>
</g></svg></div>
<div class="ic" style="left:807px;top:575px"><svg width="13" height="13" viewBox="0 0 13 13"><g fill="none" stroke="#3d3d3d" stroke-width="1.05" stroke-linejoin="round">
<rect x="1.5" y="1.5" width="7.2" height="7.2" rx="1.8" fill="#f6f6f6"/>
<rect x="3.6" y="3.6" width="8" height="8" rx="2" fill="#fafafa" stroke-width="1.15"/>
<path d="M7.5 5.3 V9.6 M5.3 7.45 H9.7" stroke-linecap="round" stroke-width="1.2"/>
</g></svg></div>
<div class="ic" style="left:831px;top:574px"><svg width="13" height="14" viewBox="0 0 13 14"><g fill="none" stroke="#e5503a" stroke-linejoin="round" stroke-linecap="round">
<path d="M4.4 3.2 V2.7 Q4.4 1.7 5.4 1.7 H7 Q8 1.7 8 2.7 V3.2" stroke-width="1.2"/>
<path d="M1.7 3.75 H11.1" stroke-width="1.5"/>
<path d="M2.7 4 V11.2 Q2.7 12.6 4.1 12.6 H8.9 Q10.2 12.6 10.2 11.2 V4" stroke-width="1.4"/>
<path d="M5 5.9 V10.6" stroke-width="1.1" stroke-opacity="0.8"/>
<path d="M7.7 5.9 V10.6" stroke-width="1.2"/>
</g></svg></div>
<div class="ic" style="left:857px;top:576px"><svg width="9" height="11" viewBox="0 0 9 11"><g fill="#333">
<circle cx="2.3" cy="1.6" r="1.2"/><circle cx="6.1" cy="1.6" r="1.2"/>
<circle cx="2.3" cy="5.2" r="1.2"/><circle cx="6.1" cy="5.2" r="1.2"/>
<circle cx="2.3" cy="8.8" r="1.2"/><circle cx="6.1" cy="8.8" r="1.2"/>
</g></svg></div>
<div class="hline" style="top:599px"></div>
<svg class="abs" style="left:0;top:0" width="1024" height="603" viewBox="0 0 1024 603"><g fill="none" stroke="#e21c1c" stroke-width="5"><rect x="98.5" y="145.5" width="42.5" height="160.5"/><rect x="698.5" y="151.5" width="72" height="24"/></g><polygon fill="#e21c1c" points="172,159 666.5,161.4 666.5,151.8 691,164.3 666.5,176.8 666.5,166.6 172,164.1"/></svg>
</body></html>
